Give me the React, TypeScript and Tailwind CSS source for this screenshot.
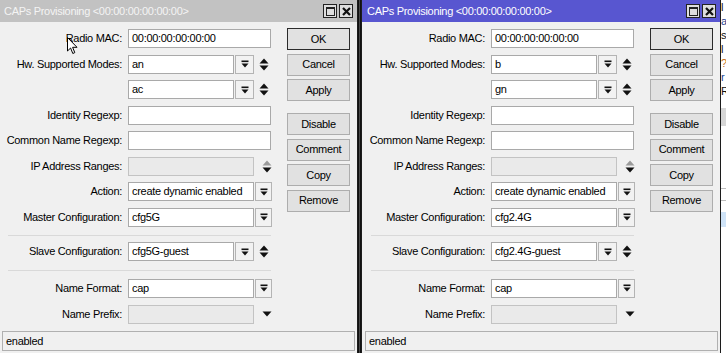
import React from 'react';

type Kind = 'full' | 'multi' | 'select' | 'disabledUpDown' | 'disabledDown';

type Row =
  | { sep: true; mt: string }
  | { sep?: false; label: string; value?: string; kind: Kind; mt: string };

const DropIcon = () => (
  <svg width="8" height="8" viewBox="0 0 8 8">
    <rect x="0.5" y="0.5" width="7" height="1.6" fill="#111" />
    <polygon points="0.5,3.4 7.5,3.4 4,7.6" fill="#111" />
  </svg>
);

const UpDown = ({ dim = false }: { dim?: boolean }) => (
  <svg width="10" height="13" viewBox="0 0 10 13">
    <polygon points="0.5,5.5 5,0.5 9.5,5.5" fill={dim ? '#9a9a9a' : '#111'} />
    <polygon points="0.5,7.5 9.5,7.5 5,12.5" fill="#111" />
  </svg>
);

const DownOnly = () => (
  <svg width="10" height="6" viewBox="0 0 10 6">
    <polygon points="0.5,0.5 9.5,0.5 5,5.5" fill="#111" />
  </svg>
);

function Input({ value, width, disabled }: { value?: string; width: string; disabled?: boolean }) {
  return (
    <div
      className={`${width} h-[19px] border flex items-center pl-[3px] overflow-hidden whitespace-nowrap ${
        disabled ? 'bg-[#eaeaea] border-[#c3c3c3]' : 'bg-white border-[#a9a9a9]'
      }`}
    >
      {value}
    </div>
  );
}

function DropButton({ width }: { width: string }) {
  return (
    <div className={`${width} h-[19px] border border-[#b4b4b4] bg-[#f2f2f2] flex items-center justify-center`}>
      <DropIcon />
    </div>
  );
}

function Field({ kind, value }: { kind: Kind; value?: string }) {
  if (kind === 'full') return <Input value={value} width="w-[143px]" />;
  if (kind === 'multi')
    return (
      <div className="flex items-center">
        <Input value={value} width="w-[106px]" />
        <div className="ml-[1px]">
          <DropButton width="w-[19px]" />
        </div>
        <div className="ml-[5px] flex items-center">
          <UpDown />
        </div>
      </div>
    );
  if (kind === 'select')
    return (
      <div className="flex items-center">
        <Input value={value} width="w-[126px]" />
        <div className="ml-[1px]">
          <DropButton width="w-[17px]" />
        </div>
      </div>
    );
  if (kind === 'disabledUpDown')
    return (
      <div className="flex items-center">
        <Input width="w-[126px]" disabled />
        <div className="ml-[8px] flex items-center">
          <UpDown dim />
        </div>
      </div>
    );
  return (
    <div className="flex items-center">
      <Input width="w-[126px]" disabled />
      <div className="ml-[8px] flex items-center">
        <DownOnly />
      </div>
    </div>
  );
}

function TitleButtons() {
  return (
    <div className="flex gap-[2px]">
      <div className="w-[14px] h-[14px] border border-[#222] bg-[#dedede] flex items-center justify-center">
        <div className="w-[9px] h-[9px] border border-[#222] border-t-2" />
      </div>
      <div className="w-[14px] h-[14px] border border-[#222] bg-[#dedede] flex items-center justify-center">
        <svg width="9" height="9" viewBox="0 0 9 9">
          <path d="M1 1 L8 8 M8 1 L1 8" stroke="#111" strokeWidth="2.2" />
        </svg>
      </div>
    </div>
  );
}

function Btn({ label, primary, className = '' }: { label: string; primary?: boolean; className?: string }) {
  return (
    <div
      className={`w-[63px] h-[22px] flex items-center justify-center bg-[#e1e1e1] border ${
        primary ? 'border-[#2b2b2b]' : 'border-[#adadad]'
      } ${className}`}
    >
      {label}
    </div>
  );
}

function Window({ active, rows, className = '' }: { active?: boolean; rows: Row[]; className?: string }) {
  return (
    <div className={`w-[360px] h-[353px] border-x border-[#1c1c1c] bg-[#f0f0f0] flex flex-col shrink-0 ${className}`}>
      <div
        className={`h-[22px] flex items-center justify-between pl-[5px] pr-[4px] shrink-0 ${
          active ? 'bg-[#5856d0] text-white' : 'bg-[#c2c2c2] text-[#f4f4f4]'
        }`}
      >
        <span>CAPs Provisioning &lt;00:00:00:00:00:00&gt;</span>
        <TitleButtons />
      </div>
      <div className="flex">
        <div className="w-[288px] pt-[7px] flex flex-col">
          {rows.map((r, i) =>
            r.sep ? (
              <div key={i} className={`${r.mt} ml-[9px] w-[263px] h-px bg-[#d9d9d9]`} />
            ) : (
              <div key={i} className={`${r.mt} flex items-center h-[19px]`}>
                <div className="w-[123px] text-right whitespace-nowrap">{r.label}</div>
                <div className="ml-[6px]">
                  <Field kind={r.kind} value={r.value} />
                </div>
              </div>
            )
          )}
        </div>
        <div className="pt-[6px] flex flex-col gap-[3.5px]">
          <Btn label="OK" primary />
          <Btn label="Cancel" />
          <Btn label="Apply" />
          <Btn label="Disable" className="mt-[8.5px]" />
          <Btn label="Comment" />
          <Btn label="Copy" />
          <Btn label="Remove" />
        </div>
      </div>
      <div className="mt-auto mb-[2px] ml-[3px] w-[353px] h-[20px] border border-[#b0b0b0] flex items-center pl-[3px]">
        enabled
      </div>
    </div>
  );
}

function makeRows(modeA: string, modeB: string, master: string, slave: string): Row[] {
  return [
    { label: 'Radio MAC:', value: '00:00:00:00:00:00', kind: 'full', mt: 'mt-0' },
    { label: 'Hw. Supported Modes:', value: modeA, kind: 'multi', mt: 'mt-[6.5px]' },
    { label: '', value: modeB, kind: 'multi', mt: 'mt-[6.5px]' },
    { label: 'Identity Regexp:', kind: 'full', mt: 'mt-[6.5px]' },
    { label: 'Common Name Regexp:', kind: 'full', mt: 'mt-[6.5px]' },
    { label: 'IP Address Ranges:', kind: 'disabledUpDown', mt: 'mt-[6.5px]' },
    { label: 'Action:', value: 'create dynamic enabled', kind: 'select', mt: 'mt-[6.5px]' },
    { label: 'Master Configuration:', value: master, kind: 'select', mt: 'mt-[6.5px]' },
    { sep: true, mt: 'mt-[8.5px]' },
    { label: 'Slave Configuration:', value: slave, kind: 'multi', mt: 'mt-[6px]' },
    { sep: true, mt: 'mt-[9px]' },
    { label: 'Name Format:', value: 'cap', kind: 'select', mt: 'mt-[7.5px]' },
    { label: 'Name Prefix:', kind: 'disabledDown', mt: 'mt-[7px]' },
  ];
}

export default function App() {
  return (
    <div
      className="relative w-[726px] h-[353px] overflow-hidden flex bg-[#3b3b3b] text-[11px] tracking-[-0.3px] text-black leading-none"
      style={{ fontFamily: '"Liberation Sans", Arial, sans-serif' }}
    >
      <Window rows={makeRows('an', 'ac', 'cfg5G', 'cfg5G-guest')} className="-ml-[2px]" />
      <div className="w-[3px] shrink-0 bg-[#4a4a4a] border-x border-[#111]" />
      <Window active rows={makeRows('b', 'gn', 'cfg2.4G', 'cfg2.4G-guest')} />
      {/* window behind, mostly hidden */}
      <div className="flex-1 bg-white flex flex-col text-[11px] leading-[14px] overflow-hidden">
        <span className="text-[#111]">l</span>
        <span className="text-[#1d3f8f]">a</span>
        <span className="text-[#111]">s</span>
        <span className="text-[#111]">l</span>
        <span className="text-[#c8701c]">?</span>
        <span className="text-[#1d3f8f]">r</span>
        <span className="text-[#111]">R</span>
        <div className="mt-[10px] h-[18px] bg-[#d6d6d6]" />
        <div className="mt-[62px] h-px bg-[#bdbdbd]" />
        <div className="mt-[11px] h-px bg-[#bdbdbd]" />
        <div className="mt-[11px] h-[15px] bg-[#cfe3f7]" />
      </div>
      {/* mouse pointer over the Radio MAC label */}
      <svg className="absolute left-[67px] top-[37px]" width="12" height="18" viewBox="0 0 12 18">
        <path d="M0.5 0.5 L0.5 14 L3.6 11 L5.8 16.5 L7.8 15.6 L5.6 10.3 L10 10.3 Z" fill="#fff" stroke="#000" strokeWidth="1" strokeLinejoin="miter" />
      </svg>
    </div>
  );
}
